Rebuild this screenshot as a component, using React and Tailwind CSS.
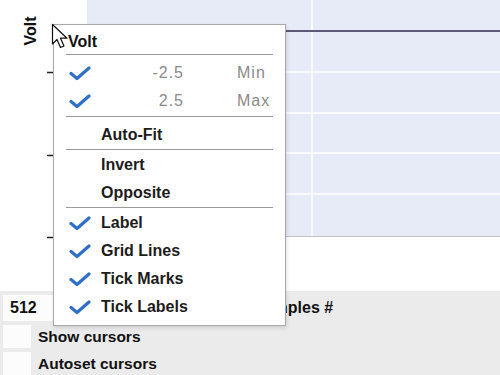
import React from "react";

const Check = () => (
  <svg width="22" height="16" viewBox="0 0 22 16" className="shrink-0">
    <path d="M2 8.5 L8 13.5 L20 3" fill="none" stroke="#2f6fc9" strokeWidth="3.2" strokeLinecap="round" strokeLinejoin="round" />
  </svg>
);

const Divider = () => <div className="mx-3 h-px bg-[#9a9a9a]" />;

const Item = ({ checked, children }) => (
  <div className="flex h-[28px] items-center">
    <div className="flex w-[47px] justify-end pr-[10px]">{checked ? <Check /> : null}</div>
    <span className="font-bold text-[16px] text-[#1c1c1c]">{children}</span>
  </div>
);

const Range = ({ value, label }) => (
  <div className="flex h-[28px] items-center">
    <div className="flex w-[47px] justify-end pr-[10px]"><Check /></div>
    <span className="w-[83px] text-right text-[16px] tracking-[1px] text-[#8a8a8a]">{value}</span>
    <span className="ml-[53px] text-[16px] tracking-[1px] text-[#8a8a8a]">{label}</span>
  </div>
);

export default function App() {
  return (
    <div className="relative h-[375px] w-[500px] overflow-hidden bg-white" style={{ fontFamily: '"Liberation Sans", Arial, sans-serif' }}>
      <div className="flex h-[291px]">
        <div className="relative w-[87px]">
          <div className="absolute left-[16px] top-[19px] -rotate-90 text-[16px] font-bold text-[#111]">Volt</div>
          <svg className="absolute left-0 top-0" width="87" height="291">
            <line x1="47" y1="72.5" x2="53" y2="72.5" stroke="#222" strokeWidth="1.5" />
            <line x1="47" y1="155.5" x2="53" y2="155.5" stroke="#222" strokeWidth="1.5" />
            <line x1="47" y1="237.5" x2="53" y2="237.5" stroke="#222" strokeWidth="1.5" />
          </svg>
        </div>
        <div className="flex flex-1 flex-col">
          <div className="h-[237px] border-b border-[#c4c4c8] bg-[#e7ebf8]">
            <svg width="413" height="236">
              <line x1="225" y1="0" x2="225" y2="236" stroke="#ffffff" strokeWidth="1.5" />
              <line x1="0" y1="72" x2="413" y2="72" stroke="#ffffff" strokeWidth="1.5" />
              <line x1="0" y1="113" x2="413" y2="113" stroke="#ffffff" strokeWidth="1.5" />
              <line x1="0" y1="153" x2="413" y2="153" stroke="#ffffff" strokeWidth="1.5" />
              <line x1="0" y1="194" x2="413" y2="194" stroke="#ffffff" strokeWidth="1.5" />
              <line x1="0" y1="31" x2="413" y2="31" stroke="#5c5a78" strokeWidth="2" />
            </svg>
          </div>
        </div>
      </div>

      <div className="flex h-[84px] flex-col gap-[4px] bg-[#ebebeb] pl-[3px] pt-[4px] text-[#111]">
        <div className="flex h-[26px] items-center">
          <div className="flex h-full w-[50px] items-center bg-[#fcfcfc] pl-[7px] text-[16px] font-bold">512</div>
          <span className="ml-[201px] text-[16px] font-bold">Samples #</span>
        </div>
        <div className="flex h-[23px] items-center">
          <div className="h-full w-[28px] bg-[#fcfcfc]" />
          <span className="ml-[7px] text-[15.5px] font-bold">Show cursors</span>
        </div>
        <div className="flex h-[23px] items-center">
          <div className="h-full w-[28px] bg-[#fcfcfc]" />
          <span className="ml-[7px] text-[15.5px] font-bold">Autoset cursors</span>
        </div>
      </div>

      <div className="absolute left-[53px] top-[24px] flex h-[302px] w-[233px] flex-col border border-[#a8a8a8] bg-white shadow-[1px_2px_4px_rgba(0,0,0,0.12)]">
        <div className="flex h-[29px] items-center pl-[14px] pt-[5px] text-[16px] font-bold text-[#111]">Volt</div>
        <Divider />
        <div className="pt-[4px]">
          <Range value="-2.5" label="Min" />
          <Range value="2.5" label="Max" />
        </div>
        <div className="pt-[1px]"><Divider /></div>
        <div className="pt-[4px]"><Item>Auto-Fit</Item></div>
        <div className="pt-[0px]"><Divider /></div>
        <div className="pt-[1px]">
          <Item>Invert</Item>
          <Item>Opposite</Item>
        </div>
        <div className="pt-[0px]"><Divider /></div>
        <div className="pt-[1px]">
          <Item checked>Label</Item>
          <Item checked>Grid Lines</Item>
          <Item checked>Tick Marks</Item>
          <Item checked>Tick Labels</Item>
        </div>
      </div>

      <svg className="absolute left-[51px] top-[23px]" width="24" height="30" viewBox="0 0 24 30">
        <path d="M1.5 1.5 L1.5 21 L6 16.5 L9.5 24.5 L13 23 L9.5 15.2 L16 15.2 Z" fill="#ffffff" stroke="#111" strokeWidth="1.2" strokeLinejoin="round" />
      </svg>
    </div>
  );
}
